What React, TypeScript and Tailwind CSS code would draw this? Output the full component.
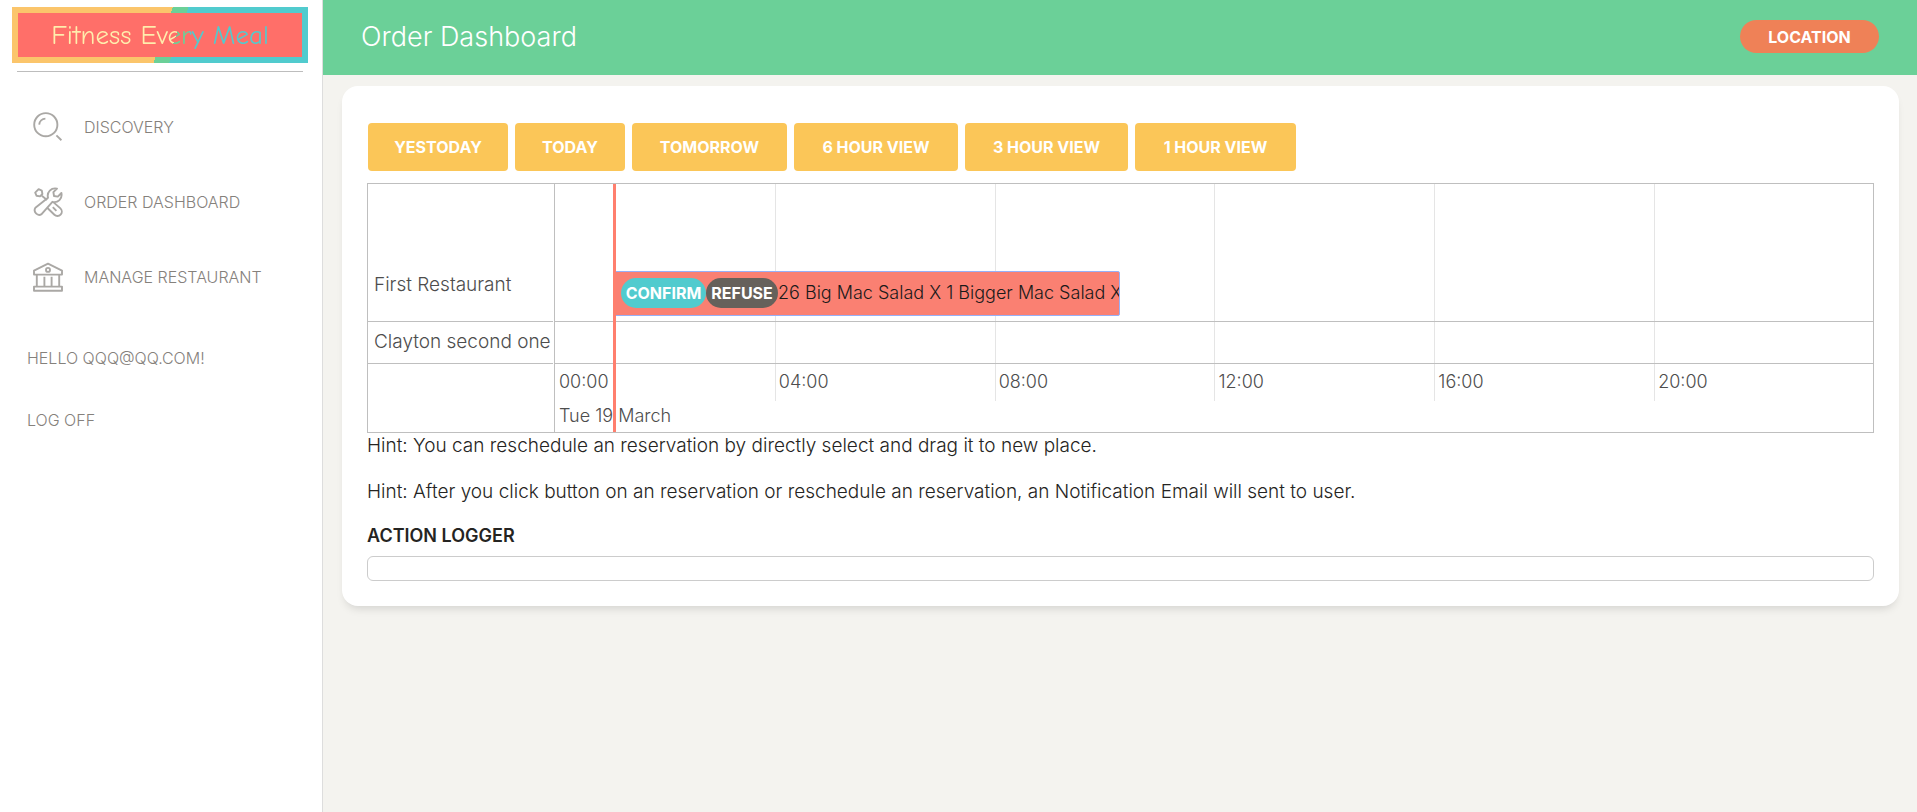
import type { ReactNode } from "react";

const DAY_HOURS = 24;

const ranges = [
  { label: "YESTODAY", width: "w-[140px]" },
  { label: "TODAY", width: "w-[110px]" },
  { label: "TOMORROW", width: "w-[155px]" },
  { label: "6 HOUR VIEW", width: "w-[164px]" },
  { label: "3 HOUR VIEW", width: "w-[163px]" },
  { label: "1 HOUR VIEW", width: "w-[161px]" },
];

const ticks = ["00:00", "04:00", "08:00", "12:00", "16:00", "20:00"];

const reservation = {
  start: 1.075,
  end: 10.28,
  text: "26 Big Mac Salad X 1 Bigger Mac Salad X 1",
};

const percent = (hours: number) => `${(hours / DAY_HOURS) * 100}%`;

function Icon({ children }: { children: ReactNode }) {
  return (
    <svg
      viewBox="0 0 30 30"
      className="size-[30px] shrink-0"
      fill="none"
      stroke="currentColor"
      strokeWidth="1.9"
      strokeLinejoin="round"
      aria-hidden="true"
    >
      {children}
    </svg>
  );
}

function SearchIcon() {
  return (
    <Icon>
      <circle cx="12.8" cy="12.7" r="11.6" />
      <path d="M6.2 12.6A6.6 6.6 0 0 1 12.4 6.6" />
      <path d="M23.4 23.4L28.4 28.2" />
    </Icon>
  );
}

function ToolsIcon() {
  return (
    <Icon>
      <path d="M15 10.8C13.6 5 18.2 .4 24 1.6L20.4 5.2L21 9L24.8 9.6L28.4 6C29.6 11.8 25 16.2 19.4 14.8L8.6 27.2A4.6 4.6 0 0 1 2.4 20.8Z" />
      <path d="M8.8 8.8L14 13" />
      <path d="M5.6 2.2L8.8 3.6L9.4 7L7 9.4L3.6 8.8L2.2 5.6Z" />
      <path d="M20.6 15.4L27.4 21.4A4.3 4.3 0 0 1 21.4 27.8L14.2 20.8" />
      <path d="M19.8 20.2L23.4 23.8" />
    </Icon>
  );
}

function BankIcon() {
  return (
    <Icon>
      <path d="M1 12.6V8.6L15 1.6L29 8.6V12.6Z" />
      <circle cx="15" cy="7.9" r="2" />
      <path d="M1 28.8V24.6H29V28.8Z" />
      <path d="M3.8 12.6V24.6M11.4 14.8V24.6M18.6 14.8V24.6M26.2 12.6V24.6" />
    </Icon>
  );
}

const links = [
  { label: "DISCOVERY", icon: <SearchIcon /> },
  { label: "ORDER DASHBOARD", icon: <ToolsIcon /> },
  { label: "MANAGE RESTAURANT", icon: <BankIcon /> },
];

function Sidebar() {
  return (
    <aside className="w-[323px] shrink-0 border-r border-[#dddddd] bg-white text-base font-light text-[#85817c]">
      <a
        href="#home"
        className="mx-3 mt-[7px] block h-14 w-[296px] bg-[linear-gradient(109deg,#fbc56b_51%,#6bd098_51%,#6bd098_56%,#51cbce_56%)] p-1.5"
      >
        <span className="flex h-full items-center justify-center bg-[#ff6f69]">
          <span className="bg-[linear-gradient(109deg,#ffeead_57%,#6bd098_57%,#6bd098_62%,#51cbce_62%)] bg-clip-text pt-0.5 font-['Comic_Sans_MS','Comic_Neue','Lato',sans-serif] text-[27px] leading-10 font-medium text-transparent">
            Fitness Every Meal
          </span>
        </span>
      </a>
      <hr className="mt-2 mr-[19px] ml-[17px] border-[#bdbdbd]" />
      <nav className="mt-[17px]">
        {links.map((link) => (
          <a key={link.label} href="#nav" className="flex h-[75px] items-center gap-[21px] pl-[33px]">
            <span className="text-[#aaa8a5]">{link.icon}</span>
            {link.label}
          </a>
        ))}
      </nav>
      <div className="mt-8 flex flex-col gap-[38px] pl-[27px] leading-6">
        <a href="#account">HELLO QQQ@QQ.COM!</a>
        <a href="#logoff">LOG OFF</a>
      </div>
    </aside>
  );
}

function GridLines() {
  return (
    <div className="-mr-px grid h-full grid-cols-6">
      {ticks.map((tick) => (
        <span key={tick} className="border-l border-[#e5e5e5] first:border-transparent" />
      ))}
    </div>
  );
}

function Timeline() {
  return (
    <section className="flex border border-[#bfbfbf] text-lg font-light text-[#4d4d4d]">
      <div className="w-[187px] shrink-0 border-r border-[#bfbfbf] pr-px text-[19px]">
        <div className="flex h-[138px] items-end border-b border-[#bfbfbf] px-1.5 pb-6 leading-6">First Restaurant</div>
        <div className="flex h-[42px] items-center border-b border-[#bfbfbf] px-1.5 pb-0.5 leading-6 whitespace-nowrap">
          Clayton second one
        </div>
      </div>
      <div className="relative min-w-0 flex-1">
        <div className="h-[138px] border-b border-[#bfbfbf]">
          <GridLines />
        </div>
        <div className="h-[42px] border-b border-[#bfbfbf]">
          <GridLines />
        </div>
        <div className="-mr-px grid h-[37px] grid-cols-6 leading-[35px]">
          {ticks.map((tick) => (
            <span key={tick} className="border-l border-[#e5e5e5] pl-[3px] first:border-transparent">
              {tick}
            </span>
          ))}
        </div>
        <div className="h-[31px] pl-1 leading-[29px]">Tue 19 March</div>
        <div
          className="absolute top-[87px] flex h-[45px] items-center overflow-hidden rounded-xs border border-[#97b0f8] bg-[#fa8072] pb-0.5 pl-1.5 whitespace-nowrap text-[#1a1a1a]"
          style={{ left: percent(reservation.start), width: percent(reservation.end - reservation.start) }}
        >
          <button className="h-[30px] w-[85px] shrink-0 rounded-full bg-[#51cbce] text-base font-bold text-white">CONFIRM</button>
          <button className="h-[30px] w-[72px] shrink-0 rounded-full bg-[#66615b] text-base font-bold text-white">REFUSE</button>
          <span>{reservation.text}</span>
        </div>
        <div className="absolute inset-y-0 w-[3px] bg-[#ff7f6e]" style={{ left: percent(1.06) }} />
      </div>
    </section>
  );
}

export default function App() {
  return (
    <div className="flex min-h-screen bg-[#f4f3ef] font-['Inter','Liberation_Sans',sans-serif]">
      <Sidebar />
      <main className="min-w-0 flex-1">
        <header className="flex h-[75px] items-center justify-between bg-[#6bd098] pr-[38px] pb-0.5 pl-[38px]">
          <h1 className="text-[27px] leading-8 font-light text-white">Order Dashboard</h1>
          <button className="h-[33px] w-[139px] rounded-full bg-[#ef8157] text-base font-bold text-white">LOCATION</button>
        </header>
        <div className="mt-[11px] mr-[18px] ml-[19px] rounded-2xl bg-white px-[25px] pt-[37px] pb-[25px] shadow-[0_6px_10px_-4px_rgba(0,0,0,0.15)]">
          <div className="mb-3 ml-px flex gap-[7px]">
            {ranges.map((range) => (
              <button
                key={range.label}
                className={`h-12 rounded bg-[#fbc658] text-base font-bold text-white ${range.width}`}
              >
                {range.label}
              </button>
            ))}
          </div>
          <Timeline />
          <div className="flex flex-col gap-[22px] pt-px text-[19px] leading-6 font-light text-[#252422]">
            <p>Hint: You can reschedule an reservation by directly select and drag it to new place.</p>
            <p>Hint: After you click button on an reservation or reschedule an reservation, an Notification Email will sent to user.</p>
          </div>
          <h2 className="mt-5 mb-2 text-lg leading-6 font-semibold text-[#252422]">ACTION LOGGER</h2>
          <div className="h-[25px] rounded-md border border-[#cccccc]" />
        </div>
      </main>
    </div>
  );
}
